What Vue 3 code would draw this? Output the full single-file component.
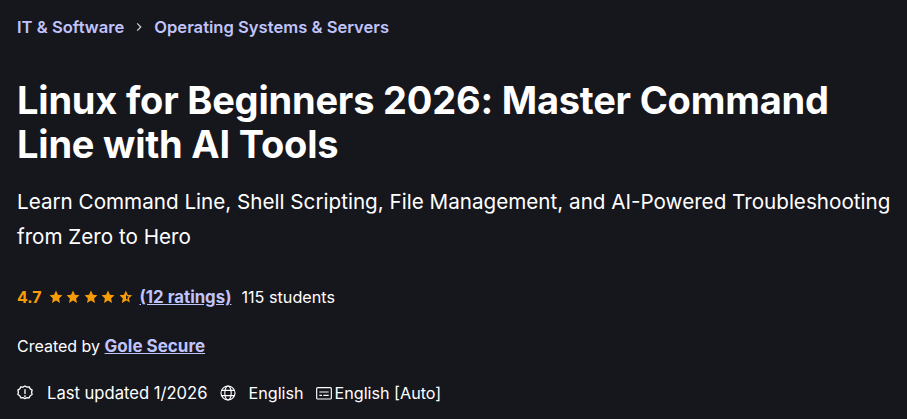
<script setup>
</script>
<template>
  <div class="page">
    <nav class="crumbs">
      <a>IT &amp; Software</a>
      <svg class="chev" width="14" height="14" viewBox="0 0 14 14"><path d="M5.2 3.4 8.8 7l-3.6 3.6" fill="none" stroke="#d1d2e0" stroke-width="1.2"/></svg>
      <a>Operating Systems &amp; Servers</a>
    </nav>
    <h1>Linux for Beginners 2026: Master Command Line with AI Tools</h1>
    <p class="sub">Learn Command Line, Shell Scripting, File Management, and AI-Powered Troubleshooting from Zero to Hero</p>
    <div class="rating">
      <b class="num">4.7</b>
      <span class="stars">
        <svg v-for="i in 4" :key="i" width="14" height="14" viewBox="0 0 24 24"><path fill="#f69c08" d="M12 1l3.3 7.3 7.7.9-5.7 5.2 1.6 7.7L12 18.2l-6.9 3.9 1.6-7.7L1 9.2l7.7-.9z"/></svg>
        <svg width="14" height="14" viewBox="0 0 24 24"><path fill="none" stroke="#f69c08" stroke-width="2.4" d="M12 4.5l2.3 5 5.4.6-4 3.6 1.1 5.3-4.8-2.7-4.8 2.7 1.1-5.3-4-3.6 5.4-.6z"/><path fill="#f69c08" d="M12 1v17.2l-6.9 3.9 1.6-7.7L1 9.2l7.7-.9z"/></svg>
      </span>
      <a class="link">(12 ratings)</a>
      <span class="students">115 students</span>
    </div>
    <div class="created">Created by <a class="link">Gole Secure</a></div>
    <div class="meta">
      <span class="item first"><svg width="16" height="16" viewBox="0 0 24 24" fill="none" stroke="#fff" stroke-width="2"><path d="M12 1.5l3 1.6 3.4-.3 1.4 3.1 2.9 1.8-.8 3.3.8 3.3-2.9 1.8-1.4 3.1-3.4-.3-3 1.6-3-1.6-3.4.3-1.4-3.1-2.9-1.8.8-3.3-.8-3.3 2.9-1.8 1.4-3.1 3.4.3z" stroke-linejoin="round"/><path d="M12 6.5v7"/><path d="M12 15.5v2.4"/></svg>Last updated 1/2026</span>
      <span class="item"><svg width="16" height="16" viewBox="0 0 24 24" fill="none" stroke="#fff" stroke-width="1.7"><circle cx="12" cy="12" r="10.5"/><ellipse cx="12" cy="12" rx="4.8" ry="10.5"/><path d="M2.4 8h19.2M2.4 16h19.2"/></svg><span class="narrow">English</span></span>
      <span class="item cc"><svg width="16" height="16" viewBox="0 0 24 24" fill="none" stroke="#fff" stroke-width="1.7"><rect x="1" y="4" width="22" height="17" rx="1.5"/><path d="M5 10.5h14M5 15.5h4M11 15.5h8"/></svg><span class="narrow">English [Auto]</span></span>
    </div>
  </div>
</template>
<style>
body { margin: 0; background: #16161d; }
</style>
<style scoped>
.page { width: 907px; height: 419px; box-sizing: border-box; padding: 16px 16px 0 17px; background: #16161d; color: #fff; font-family: Inter, "Liberation Sans", sans-serif; overflow: hidden; }
.crumbs { display: flex; align-items: center; gap: 8px; font-size: 16.6px; font-weight: 600; color: #c0c4fc; height: 22px; }
h1 { margin: 40px 0 0; font-size: 38px; line-height: 44px; font-weight: 650; letter-spacing: -0.2px; width: 860px; }
.sub { margin: 18px 0 0; font-size: 20.65px; line-height: 35px; width: 885px; font-weight: 400; }
.rating { display: flex; align-items: center; margin-top: 31px; font-size: 16px; height: 24px; }
.num { color: #f69c08; font-weight: 700; margin-right: 7px; }
.stars { display: inline-flex; gap: 3.5px; margin-right: 7px; }
.link { color: #c0c4fc; font-weight: 700; text-decoration: underline; }
.rating .link { margin-right: 10px; font-size: 16.8px; }
.students { font-size: 16.2px; }
.created { margin-top: 25px; font-size: 16px; line-height: 24px; }
.created .link { font-size: 17px; }
.meta { display: flex; gap: 12px; margin-top: 23px; font-size: 16.6px; line-height: 24px; }
.item { display: inline-flex; align-items: center; gap: 13px; }
.first { gap: 14px; }
.cc { gap: 3px; }
.narrow { font-size: 16.15px; }
</style>
